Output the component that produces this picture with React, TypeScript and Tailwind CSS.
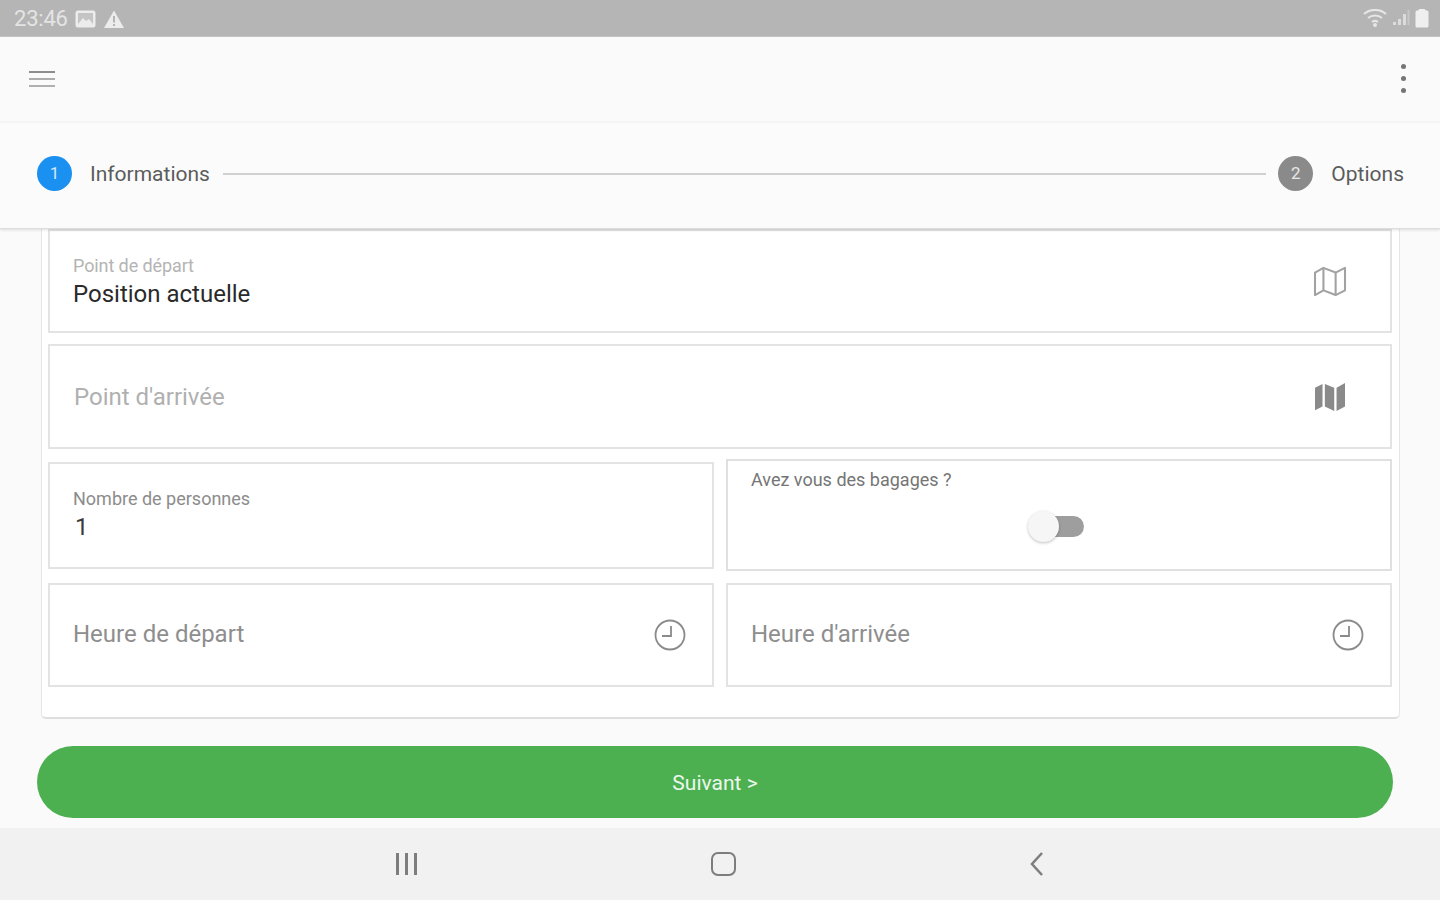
import React from "react";

const font = "font-['Roboto',sans-serif]";

const StatusBar = () => (
  <div className="h-[37px] shrink-0 bg-[#b5b5b5] flex items-center justify-between pl-[14px] pr-[11px] pt-[2px] border-b border-[#c4c4c4]">
    <div className="flex items-center gap-[8px]">
      <span className="text-[22px] leading-none text-[#e4e4e4] tracking-[-0.2px]">23:46</span>
      <svg width="21" height="18" viewBox="0 0 21 18" className="-ml-[1px]">
        <rect x="0.5" y="0.5" width="20" height="17" rx="2.5" fill="#ececec" />
        <rect x="3" y="3" width="15" height="11" fill="#c4c4c4" />
        <path d="M3 14l5-6 3 3 3-2 4 5z" fill="#ececec" />
      </svg>
      <svg width="20" height="18" viewBox="0 0 20 18">
        <path d="M10 0.5L20 18H0z" fill="#ececec" />
        <rect x="9" y="6" width="2" height="6.5" fill="#b5b5b5" />
        <rect x="9" y="14" width="2" height="2" fill="#b5b5b5" />
      </svg>
    </div>
    <div className="flex items-center gap-[5px] -mt-[2px]">
      <svg width="24" height="18" viewBox="0 0 24 18" fill="none" stroke="#e6e6e6" strokeWidth="2">
        <path d="M1 5c6-5.500 16-5.500 22 0" />
        <path d="M5 9c4-3.500 10-3.500 14 0" />
        <path d="M9 13c2-1.500 4-1.500 6 0" />
        <circle cx="12" cy="16" r="1" fill="#e6e6e6" />
      </svg>
      <svg width="18" height="18" viewBox="0 0 18 18" fill="#dcdcdc">
        <rect x="1" y="13" width="3" height="3" />
        <rect x="6" y="10" width="3" height="6" />
        <rect x="11" y="5" width="3" height="11" />
        <rect x="15.500" y="1" width="2" height="15" opacity="0.5" />
      </svg>
      <svg width="14" height="20" viewBox="0 0 14 20" fill="#efefef">
        <path d="M3 2.500L4.500 1h5L11 2.500H12a1.500 1.500 0 011.500 1.500v14a1.500 1.500 0 01-1.500 1.500H2A1.500 1.500 0 01.500 18V4A1.500 1.500 0 012 2.500z" />
      </svg>
    </div>
  </div>
);

const Toolbar = () => (
  <div className="h-[85px] shrink-0 bg-[#fafafa] flex items-center justify-between pl-[29px] pr-[34px] pb-[2px]">
    <div className="w-[26px] flex flex-col gap-[5px]">
      <div className="h-[2px] bg-[#8c8c8c]" />
      <div className="h-[2px] bg-[#acacac]" />
      <div className="h-[2px] bg-[#b0b0b0]" />
    </div>
    <div className="flex flex-col gap-[7px]">
      <div className="w-[5px] h-[5px] rounded-full bg-[#757575]" />
      <div className="w-[5px] h-[5px] rounded-full bg-[#757575]" />
      <div className="w-[5px] h-[5px] rounded-full bg-[#757575]" />
    </div>
  </div>
);

const Stepper = () => (
  <div className="relative z-10 h-[107px] shrink-0 bg-[#fbfbfb] border-t border-[#f3f3f3] border-b border-b-[#dcdcdc] shadow-[0_1px_3px_rgba(0,0,0,0.12)] flex items-center pl-[37px] pr-[36px] pb-[4px]">
    <div className="w-[35px] h-[35px] rounded-full bg-[#1a90f0] flex items-center justify-center text-white/80 text-[17px]">1</div>
    <span className="ml-[18px] mt-[1px] text-[21px] leading-none text-[#5c5c5c]">Informations</span>
    <div className="flex-1 h-[2px] bg-[#d0d0d0] ml-[13px] mr-[12px]" />
    <div className="w-[35px] h-[35px] rounded-full bg-[#8a8a8a] flex items-center justify-center text-white/80 text-[17px]">2</div>
    <span className="ml-[18px] mt-[1px] text-[21px] leading-none text-[#5c5c5c]">Options</span>
  </div>
);

const MapOutline = () => (
  <svg width="34" height="30" viewBox="0 0 36 32" fill="none" stroke="#a2a2a2" strokeWidth="2.200" strokeLinejoin="round">
    <path d="M2 7l9-5 13 5 10-5v24l-10 5-13-5-9 5z" />
    <path d="M11 2v24M24 7v24" />
  </svg>
);

const MapFilled = () => (
  <svg width="34" height="30" viewBox="0 0 36 32" fill="#8a8a8a">
    <path d="M2 6l8-4v24l-8 4z" />
    <path d="M12.500 2l10 4v25l-10-5z" />
    <path d="M25 6l9-5v25l-9 5z" />
  </svg>
);

const Clock = () => (
  <svg width="32" height="32" viewBox="0 0 32 32" fill="none" stroke="#8a8a8a" strokeWidth="1.800">
    <circle cx="16" cy="16" r="14.500" />
    <path d="M17 7v10H8" />
  </svg>
);

const Field = ({ className = "", children }: { className?: string; children: React.ReactNode }) => (
  <div className={`border-2 border-[#e3e3e3] bg-white flex items-center justify-between ${className}`}>{children}</div>
);

const FormCard = () => (
  <div className="-mt-[1px] mx-[41px] w-[1359px] h-[491px] shrink-0 bg-white border border-[#e6e6e6] border-b-2 border-b-[#dedede] rounded-b-[5px] pl-[6px] pr-[7px] flex flex-col">
    <Field className="h-[104px] pl-[23px] pr-[43px]">
      <div className="flex flex-col pt-[3px]">
        <span className="text-[18px] leading-[20px] text-[#b4b4b4] -tracking-[0.1px]">Point de départ</span>
        <span className="text-[24px] leading-[30px] mt-[3px] text-[#2a2a2a]">Position actuelle</span>
      </div>
      <MapOutline />
    </Field>
    <Field className="h-[105px] mt-[11px] pl-[24px] pr-[43px]">
      <span className="text-[24px] text-[#b0b0b0]">Point d'arrivée</span>
      <MapFilled />
    </Field>
    <div className="grid grid-cols-2 gap-x-[12px] items-center h-[112px] mt-[10px]">
      <Field className="h-[107px] pl-[23px]">
        <div className="flex flex-col">
          <span className="text-[18px] leading-[22px] text-[#8c8c8c]">Nombre de personnes</span>
          <span className="text-[24px] leading-[30px] mt-[2px] text-[#3a3a3a] pl-[2px]">1</span>
        </div>
      </Field>
      <div className="h-[112px] border-2 border-[#e0e0e0] bg-white flex flex-col pl-[23px] pt-[8px]">
        <span className="text-[18px] leading-[22px] text-[#757575]">Avez vous des bagages ?</span>
        <div className="relative w-[56px] h-[32px] ml-[277px] mt-[20px]">
          <div className="absolute right-0 top-[5px] w-[40px] h-[21px] rounded-full bg-[#9e9e9e]" />
          <div className="absolute left-0 top-0 w-[31px] h-[31px] rounded-full bg-[#f6f6f6] shadow-[0_1px_3px_rgba(0,0,0,0.25)]" />
        </div>
      </div>
    </div>
    <div className="grid grid-cols-2 gap-x-[12px] mt-[12px]">
      <Field className="h-[104px] pl-[23px] pr-[26px]">
        <span className="text-[24px] text-[#8e8e8e] pb-[3px]">Heure de départ</span>
        <Clock />
      </Field>
      <Field className="h-[104px] pl-[23px] pr-[26px]">
        <span className="text-[24px] text-[#8e8e8e] pb-[3px]">Heure d'arrivée</span>
        <Clock />
      </Field>
    </div>
  </div>
);

const BottomNav = () => (
  <div className="flex-1 bg-[#f1f1f1] relative flex items-center pb-[1px]">
    <div className="w-full flex justify-between pl-[396px] pr-[395px] items-center">
      <div className="flex gap-[6px]">
        <div className="w-[3px] h-[22px] bg-[#7d7d7d]" />
        <div className="w-[3px] h-[22px] bg-[#7d7d7d]" />
        <div className="w-[3px] h-[22px] bg-[#7d7d7d]" />
      </div>
      <div className="w-[25px] h-[24px] rounded-[7px] border-2 border-[#7d7d7d]" />
      <svg width="16" height="26" viewBox="0 0 16 26" fill="none" stroke="#7d7d7d" strokeWidth="2.500">
        <path d="M13 2L3 13l10 11" />
      </svg>
    </div>
  </div>
);

export default function App() {
  return (
    <div className={`w-[1440px] h-[900px] overflow-hidden flex flex-col bg-[#fafafa] ${font}`}>
      <StatusBar />
      <Toolbar />
      <Stepper />
      <FormCard />
      <div className="shrink-0 mt-[27px] mb-[10px] mx-[37px] w-[1356px] h-[72px] pt-[3px] rounded-full bg-[#4caf50] flex items-center justify-center text-white/90 text-[21px]">
        Suivant &gt;
      </div>
      <BottomNav />
    </div>
  );
}
